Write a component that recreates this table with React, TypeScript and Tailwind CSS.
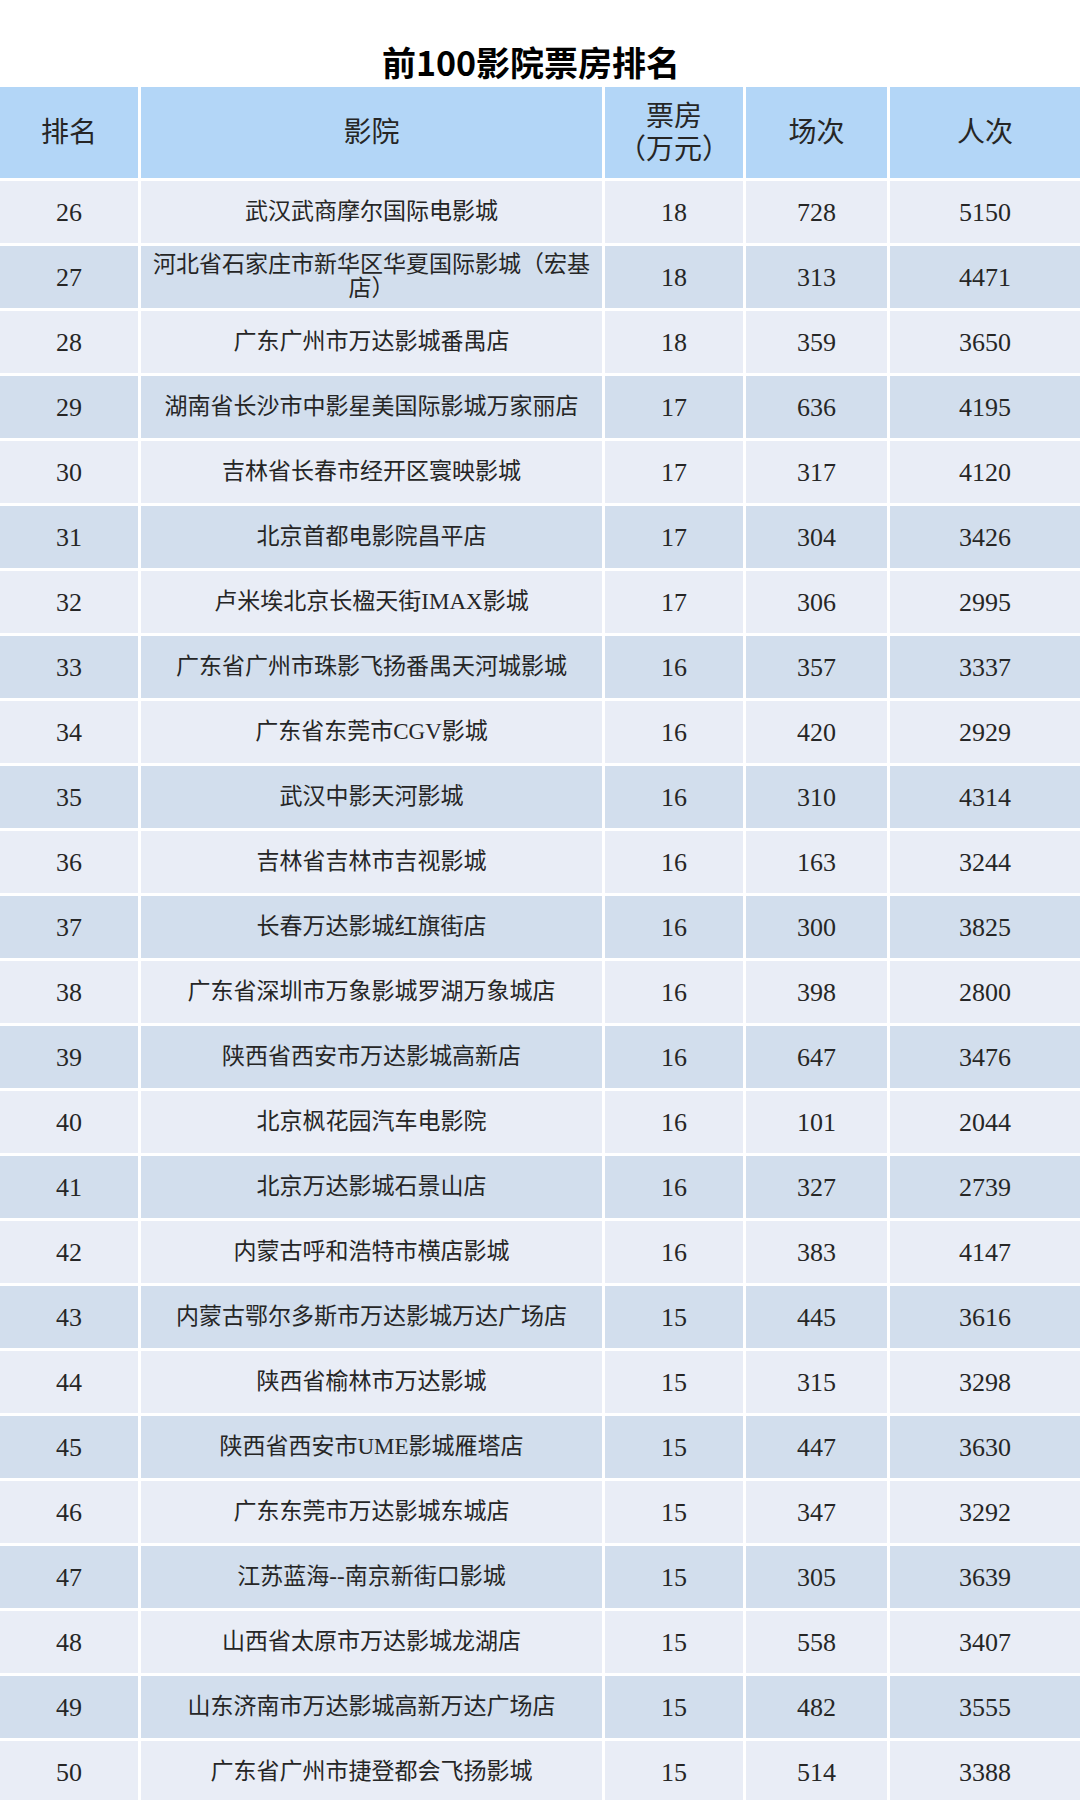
const rows: [string, string, string, string, string][] = [
  ["26", "武汉武商摩尔国际电影城", "18", "728", "5150"],
  ["27", "河北省石家庄市新华区华夏国际影城（宏基店）", "18", "313", "4471"],
  ["28", "广东广州市万达影城番禺店", "18", "359", "3650"],
  ["29", "湖南省长沙市中影星美国际影城万家丽店", "17", "636", "4195"],
  ["30", "吉林省长春市经开区寰映影城", "17", "317", "4120"],
  ["31", "北京首都电影院昌平店", "17", "304", "3426"],
  ["32", "卢米埃北京长楹天街IMAX影城", "17", "306", "2995"],
  ["33", "广东省广州市珠影飞扬番禺天河城影城", "16", "357", "3337"],
  ["34", "广东省东莞市CGV影城", "16", "420", "2929"],
  ["35", "武汉中影天河影城", "16", "310", "4314"],
  ["36", "吉林省吉林市吉视影城", "16", "163", "3244"],
  ["37", "长春万达影城红旗街店", "16", "300", "3825"],
  ["38", "广东省深圳市万象影城罗湖万象城店", "16", "398", "2800"],
  ["39", "陕西省西安市万达影城高新店", "16", "647", "3476"],
  ["40", "北京枫花园汽车电影院", "16", "101", "2044"],
  ["41", "北京万达影城石景山店", "16", "327", "2739"],
  ["42", "内蒙古呼和浩特市横店影城", "16", "383", "4147"],
  ["43", "内蒙古鄂尔多斯市万达影城万达广场店", "15", "445", "3616"],
  ["44", "陕西省榆林市万达影城", "15", "315", "3298"],
  ["45", "陕西省西安市UME影城雁塔店", "15", "447", "3630"],
  ["46", "广东东莞市万达影城东城店", "15", "347", "3292"],
  ["47", "江苏蓝海--南京新街口影城", "15", "305", "3639"],
  ["48", "山西省太原市万达影城龙湖店", "15", "558", "3407"],
  ["49", "山东济南市万达影城高新万达广场店", "15", "482", "3555"],
  ["50", "广东省广州市捷登都会飞扬影城", "15", "514", "3388"],
];

const serif = "font-['Liberation_Serif','Noto_Sans_CJK_SC',serif]";

function App() {
  return (
    <div className={`w-[1080px] h-[1800px] overflow-hidden bg-white text-[#262626] ${serif}`}>
      {/* title */}
      <div className="h-[87px] flex items-end justify-center pb-[8px] pr-[18px]">
        <h1 className="font-['Noto_Sans_CJK_SC','Noto_Sans',sans-serif] font-bold text-[34px] leading-none text-black">
          前100影院票房排名
        </h1>
      </div>

      {/* table */}
      <div className="grid grid-cols-[138px_461px_138px_141px_1fr] gap-[3px]">
        {/* header */}
        <div className="h-[91px] bg-[#b3d6f7] flex items-center justify-center text-[28px]">排名</div>
        <div className="h-[91px] bg-[#b3d6f7] flex items-center justify-center text-[28px]">影院</div>
        <div className="h-[91px] bg-[#b3d6f7] flex flex-col items-center justify-center text-[28px] leading-[33px]">
          <span>票房</span>
          <span>（万元）</span>
        </div>
        <div className="h-[91px] bg-[#b3d6f7] flex items-center justify-center text-[28px]">场次</div>
        <div className="h-[91px] bg-[#b3d6f7] flex items-center justify-center text-[28px]">人次</div>

        {rows.map((r, i) => {
          const bg = i % 2 === 0 ? "bg-[#e9edf6]" : "bg-[#d2deed]";
          return [
            <div key={r[0] + "a"} className={`${bg} h-[62px] flex items-center justify-center text-[26px]`}>
              {r[0]}
            </div>,
            <div
              key={r[0] + "b"}
              className={`${bg} h-[62px] flex items-center justify-center text-center text-[23px] leading-[24px] px-[2px]`}
            >
              {r[1]}
            </div>,
            <div key={r[0] + "c"} className={`${bg} h-[62px] flex items-center justify-center text-[26px]`}>
              {r[2]}
            </div>,
            <div key={r[0] + "d"} className={`${bg} h-[62px] flex items-center justify-center text-[26px]`}>
              {r[3]}
            </div>,
            <div key={r[0] + "e"} className={`${bg} h-[62px] flex items-center justify-center text-[26px]`}>
              {r[4]}
            </div>,
          ];
        })}
      </div>
    </div>
  );
}

export default App;
